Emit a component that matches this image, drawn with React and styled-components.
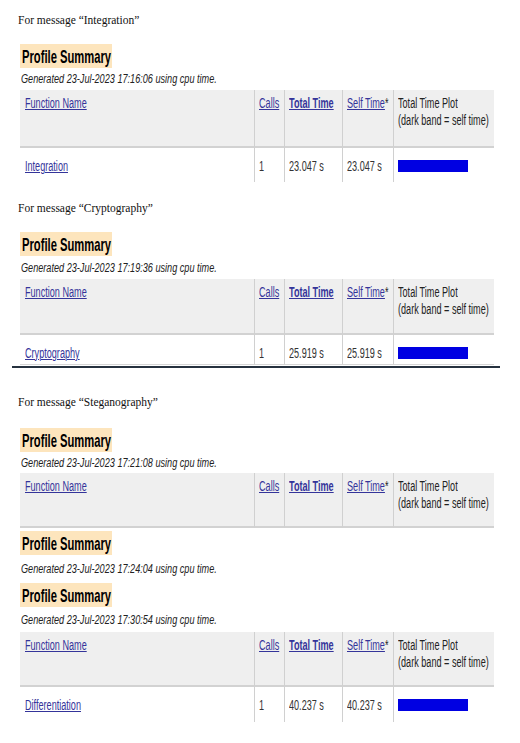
import styled, { createGlobalStyle } from "styled-components";

const GlobalStyle = createGlobalStyle`
  html, body { margin: 0; padding: 0; background: #fff; }
  body {
    font-family: "Liberation Sans", Arial, sans-serif;
    color: #333;
  }
`;

const Page = styled.div`
  width: 520px;
  height: 743px;
  overflow: hidden;
  padding-top: 13px;
  box-sizing: border-box;
`;

const Caption = styled.p`
  margin: ${(p) => p.$mt || 0}px 0 0 18px;
  font-family: "Liberation Serif", "Times New Roman", serif;
  font-size: 11.5px;
  line-height: 14px;
  color: #111;
`;

const TitleBox = styled.div`
  margin: ${(p) => p.$mt || 0}px 0 0 20px;
  width: 92px;
  height: 24px;
  background: #fde5bd;
  display: flex;
  align-items: center;
  padding-left: 2px;
  box-sizing: border-box;
`;

/* the source screenshot is squeezed sideways, so text is narrowed */
const Squash = styled.span`
  display: inline-block;
  white-space: nowrap;
  transform: scaleX(${(p) => p.$sx ?? 0.65});
  transform-origin: 0 50%;
`;

const TitleText = styled(Squash)`
  font-size: 19px;
  font-weight: bold;
  color: #000;
  line-height: 1;
`;

const Generated = styled.div`
  margin-left: 21px;
  height: ${(p) => p.$h}px;
  display: flex;
  align-items: center;
  font-style: italic;
  font-size: 12.5px;
  color: #222;
`;

const Grid = styled.div`
  margin-left: 20px;
  width: 474px;
  display: grid;
  grid-template-columns: 234px 30px 58px 51px 101px;
  font-size: 14px;
`;

const HeadCell = styled.div`
  height: ${(p) => p.$h}px;
  background: #efefef;
  border-left: ${(p) => (p.$first ? "none" : "1px solid #d0d0d0")};
  border-bottom: 2px solid #d2d2d2;
  box-sizing: border-box;
  padding: 5px 0 0 ${(p) => (p.$first ? 5 : 4)}px;
  line-height: 17px;
  color: #222;
`;

const Cell = styled.div`
  height: ${(p) => p.$h}px;
  border-left: ${(p) => (p.$first ? "none" : "1px solid #d0d0d0")};
  border-bottom: ${(p) => (p.$rule ? "1px solid #d6d6d6" : "none")};
  box-sizing: border-box;
  padding: 10px 0 0 ${(p) => (p.$first ? 5 : 4)}px;
  line-height: 17px;
  color: #333;
`;

const Link = styled.a`
  color: #34349a;
  text-decoration: underline;
  font-weight: ${(p) => (p.$bold ? "bold" : "normal")};
  cursor: pointer;
`;

const Bar = styled.div`
  width: 70px;
  height: 12px;
  margin-top: 2px;
  background: #0000e2;
`;

const Divider = styled.hr`
  margin: 1px 0 0 12px;
  width: 488px;
  height: 2px;
  border: none;
  background: #26323f;
`;

const Summary = ({ mt, time, genH }) => (
  <>
    <TitleBox $mt={mt}>
      <TitleText $sx={0.59}>Profile Summary</TitleText>
    </TitleBox>
    <Generated $h={genH}>
      <Squash $sx={0.73}>Generated 23-Jul-2023 {time} using cpu time.</Squash>
    </Generated>
  </>
);

const ProfileTable = ({ headH, row, rowH, rule }) => (
  <Grid>
    <HeadCell $h={headH} $first>
      <Squash><Link>Function Name</Link></Squash>
    </HeadCell>
    <HeadCell $h={headH}>
      <Squash><Link>Calls</Link></Squash>
    </HeadCell>
    <HeadCell $h={headH}>
      <Squash><Link $bold>Total Time</Link></Squash>
    </HeadCell>
    <HeadCell $h={headH}>
      <Squash><Link>Self Time</Link>*</Squash>
    </HeadCell>
    <HeadCell $h={headH}>
      <Squash>Total Time Plot</Squash>
      <br />
      <Squash>(dark band = self time)</Squash>
    </HeadCell>
    {row && (
      <>
        <Cell $h={rowH} $rule={rule} $first>
          <Squash><Link>{row.name}</Link></Squash>
        </Cell>
        <Cell $h={rowH} $rule={rule}>
          <Squash>1</Squash>
        </Cell>
        <Cell $h={rowH} $rule={rule}>
          <Squash>{row.time}</Squash>
        </Cell>
        <Cell $h={rowH} $rule={rule}>
          <Squash>{row.time}</Squash>
        </Cell>
        <Cell $h={rowH} $rule={rule}>
          <Bar />
        </Cell>
      </>
    )}
  </Grid>
);

export default function App() {
  return (
    <>
      <GlobalStyle />
      <Page>
        <Caption>For message “Integration”</Caption>
        <Summary mt={17} time="17:16:06" genH={22} />
        <ProfileTable
          headH={58}
          rowH={34}
          row={{ name: "Integration", time: "23.047 s" }}
        />

        <Caption $mt={19}>For message “Cryptography”</Caption>
        <Summary mt={17} time="17:19:36" genH={23} />
        <ProfileTable
          headH={56}
          rowH={30}
          rule
          row={{ name: "Cryptography", time: "25.919 s" }}
        />
        <Divider />

        <Caption $mt={27}>For message “Steganography”</Caption>
        <Summary mt={19} time="17:21:08" genH={21} />
        <ProfileTable headH={55} />
        <Summary mt={3} time="17:24:04" genH={28} />
        <Summary mt={0} time="17:30:54" genH={25} />
        <ProfileTable
          headH={55}
          rowH={35}
          row={{ name: "Differentiation", time: "40.237 s" }}
        />
      </Page>
    </>
  );
}
